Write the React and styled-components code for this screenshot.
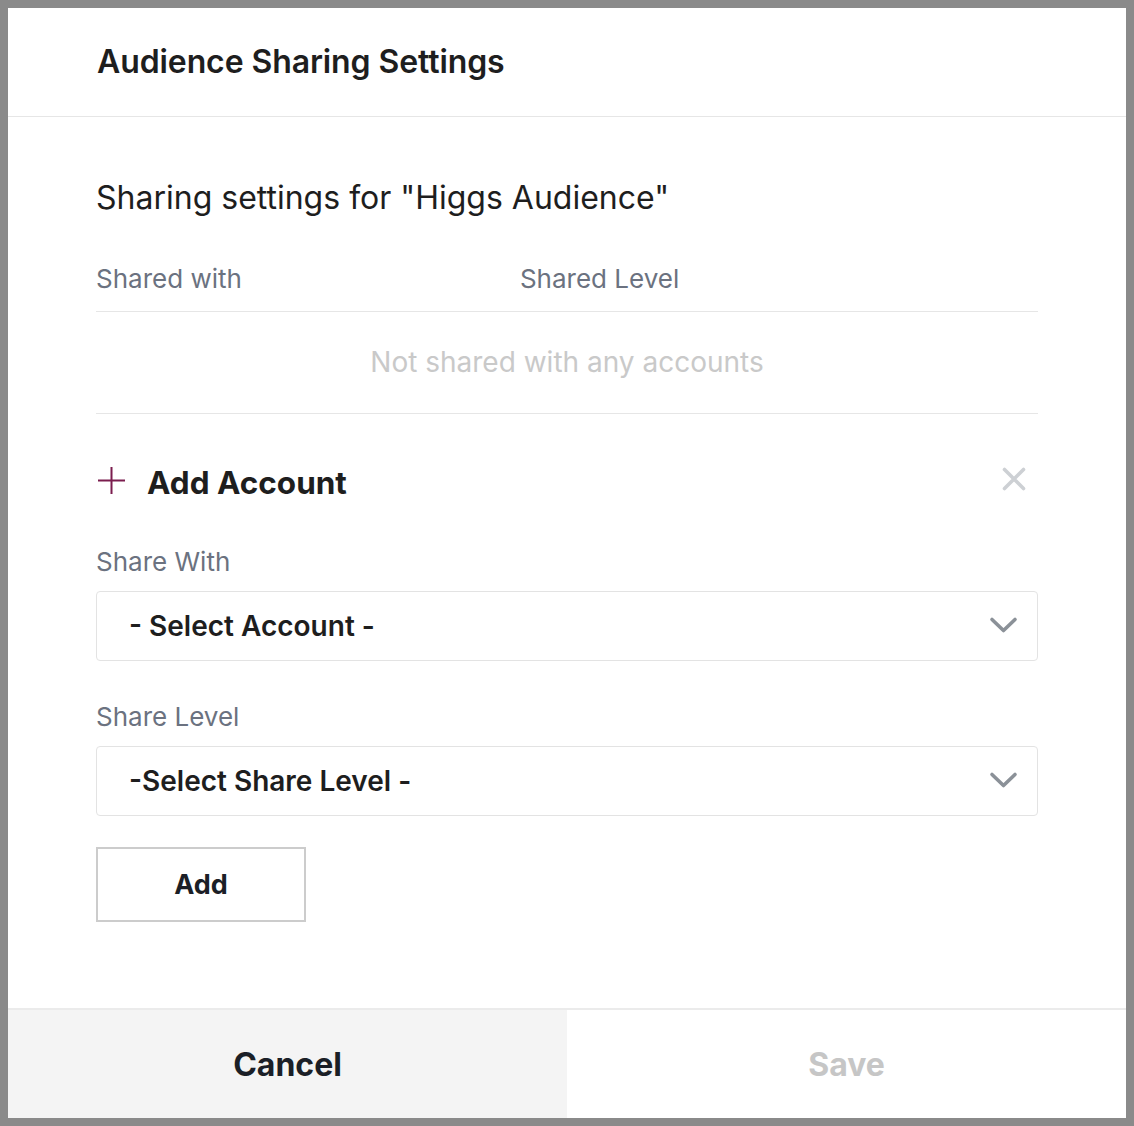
import React from "react";
import styled, { createGlobalStyle } from "styled-components";

const Global = createGlobalStyle`
  html, body { margin: 0; padding: 0; }
  body {
    background: #8a8a8a;
    font-family: Inter, "Noto Sans", Arial, sans-serif;
    -webkit-font-smoothing: antialiased;
  }
  * { box-sizing: border-box; }
`;

const Page = styled.div`
  padding: 8px;
`;

const Modal = styled.div`
  width: 1118px;
  height: 1110px;
  background: #ffffff;
  display: flex;
  flex-direction: column;
`;

const Header = styled.div`
  padding: 36px 89px;
  border-bottom: 1px solid #e6e6e6;
`;

const Title = styled.h1`
  margin: 0;
  font-size: 32px;
  line-height: 36px;
  font-weight: 600;
  color: #1e1e1e;
  letter-spacing: -0.1px;
`;

const Content = styled.div`
  padding: 63px 88px 0;
  display: flex;
  flex-direction: column;
`;

const Subtitle = styled.h2`
  margin: 0;
  font-size: 32px;
  line-height: 36px;
  font-weight: 400;
  color: #1e1e1e;
`;

const Table = styled.div`
  margin-top: 47px;
  display: grid;
  grid-template-columns: 45% 55%;
`;

const HeadCell = styled.div`
  font-size: 26px;
  line-height: 31px;
  color: #6b7280;
  padding-bottom: 17px;
  border-bottom: 1px solid #e6e6e6;
`;

const EmptyRow = styled.div`
  grid-column: 1 / -1;
  text-align: center;
  font-size: 28px;
  line-height: 35px;
  color: #c9c9c9;
  padding: 33px 0;
  border-bottom: 1px solid #e6e6e6;
`;

const AddRow = styled.div`
  margin-top: 51px;
  display: flex;
  align-items: center;
  height: 36px;
`;

const PlusIcon = styled.svg`
  width: 27px;
  height: 27px;
  margin-left: 2px;
  margin-top: -5px;
  flex: none;
`;

const AddTitle = styled.span`
  margin-left: 22px;
  font-size: 31.5px;
  line-height: 36px;
  font-weight: 700;
  color: #1e1e1e;
`;

const CloseButton = styled.button`
  margin-left: auto;
  margin-right: 11px;
  margin-top: -9px;
  width: 26px;
  height: 26px;
  padding: 0;
  border: none;
  background: transparent;
  display: flex;
  align-items: center;
  justify-content: center;
  cursor: pointer;
`;

const Label = styled.label`
  display: block;
  margin-top: ${(p) => p.$top}px;
  font-size: 26px;
  line-height: 31px;
  color: #6b7280;
`;

const Select = styled.div`
  margin-top: 13.5px;
  height: 70px;
  border: 1px solid #e3e3e3;
  border-radius: 4px;
  display: flex;
  align-items: center;
  padding: 0 19px 0 32px;
  font-size: 28px;
  font-weight: 600;
  color: #1e1e1e;
`;

const SelectText = styled.span`
  flex: 1;
`;

const Chevron = styled.svg`
  width: 29px;
  height: 19px;
  flex: none;
`;

const AddButton = styled.button`
  margin-top: 31px;
  width: 210px;
  height: 75px;
  border: 2px solid #cccccc;
  background: #ffffff;
  font-family: inherit;
  font-size: 27px;
  font-weight: 700;
  color: #1b1f27;
  cursor: pointer;
`;

const Footer = styled.div`
  margin-top: auto;
  border-top: 2px solid #ebebeb;
  display: grid;
  grid-template-columns: 559px 1fr;
  height: 110px;
`;

const FooterButton = styled.button`
  border: none;
  font-family: inherit;
  font-size: 32px;
  font-weight: 700;
  background: ${(p) => (p.$muted ? "#ffffff" : "#f4f4f4")};
  color: ${(p) => (p.$muted ? "#c6c6c6" : "#1b1f27")};
  cursor: pointer;
`;

const ChevronIcon = () => (
  <Chevron viewBox="0 0 29 19" fill="none">
    <path
      d="M3 3.5 L14.5 14.5 L26 3.5"
      stroke="#8b9198"
      strokeWidth="3.6"
      strokeLinecap="round"
      strokeLinejoin="round"
    />
  </Chevron>
);

export default function App() {
  return (
    <>
      <Global />
      <Page>
        <Modal>
          <Header>
            <Title>Audience Sharing Settings</Title>
          </Header>
          <Content>
            <Subtitle>Sharing settings for "Higgs Audience"</Subtitle>
            <Table>
              <HeadCell>Shared with</HeadCell>
              <HeadCell>Shared Level</HeadCell>
              <EmptyRow>Not shared with any accounts</EmptyRow>
            </Table>
            <AddRow>
              <PlusIcon viewBox="0 0 27 27" fill="none">
                <path d="M13.5 0 V27 M0 13.5 H27" stroke="#7b1d4e" strokeWidth="2" />
              </PlusIcon>
              <AddTitle>Add Account</AddTitle>
              <CloseButton aria-label="Close">
                <svg width="24" height="24" viewBox="0 0 24 24" fill="none">
                  <path
                    d="M2.5 2.5 L21.5 21.5 M21.5 2.5 L2.5 21.5"
                    stroke="#cdd0d4"
                    strokeWidth="3.6"
                    strokeLinecap="round"
                  />
                </svg>
              </CloseButton>
            </AddRow>
            <Label $top={45}>Share With</Label>
            <Select>
              <SelectText>- Select Account -</SelectText>
              <ChevronIcon />
            </Select>
            <Label $top={40.5}>Share Level</Label>
            <Select>
              <SelectText>-Select Share Level -</SelectText>
              <ChevronIcon />
            </Select>
            <div>
              <AddButton>Add</AddButton>
            </div>
          </Content>
          <Footer>
            <FooterButton>Cancel</FooterButton>
            <FooterButton $muted>Save</FooterButton>
          </Footer>
        </Modal>
      </Page>
    </>
  );
}
